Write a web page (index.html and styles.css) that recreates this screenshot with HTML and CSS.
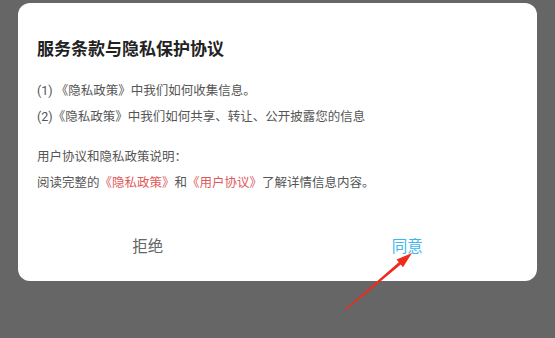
FILE: index.html
```html
<!DOCTYPE html>
<html lang="zh-CN">
<head>
<meta charset="utf-8">
<link rel="stylesheet" href="styles.css">
</head>
<body>
<div class="dialog">
  <h1 class="title">服务条款与隐私保护协议</h1>
  <p class="line">(1) 《隐私政策》中我们如何收集信息。</p>
  <p class="line">(2)《隐私政策》中我们如何共享、转让、公开披露您的信息</p>
  <p class="line gap">用户协议和隐私政策说明：</p>
  <p class="line">阅读完整的<span class="link">《隐私政策》</span>和<span class="link">《用户协议》</span>了解详情信息内容。</p>
  <div class="actions">
    <div class="btn reject">拒绝</div>
    <div class="btn agree">同意</div>
  </div>
</div>
<svg class="arrow" width="555" height="338" viewBox="0 0 555 338">
  <polygon points="344.6,309.6 398.8,262.2 396.6,259.6 412,253 403,267.2 400.8,264.5 345.4,310.4" fill="#f02a1e"/>
</svg>
</body>
</html>
```
FILE: styles.css
```css
html, body {
  margin: 0;
  padding: 0;
}
body {
  background: #666666;
  width: 555px;
  height: 338px;
  position: relative;
  overflow: hidden;
  font-family: Roboto, "Noto Sans CJK SC", sans-serif;
}
.dialog {
  margin: 3px 0 0 18px;
  width: 519px;
  height: 278px;
  background: #ffffff;
  border-radius: 12px;
  box-sizing: border-box;
  padding: 34px 19px 0 19px;
  display: flex;
  flex-direction: column;
}
.title {
  margin: 0 0 17px 0;
  font-size: 17px;
  line-height: 24px;
  font-weight: 700;
  color: #222222;
}
.line {
  margin: 0;
  font-size: 12.5px;
  line-height: 26px;
  color: #555555;
  white-space: nowrap;
}
.line.gap {
  margin-top: 14px;
}
.link {
  color: #e0595a;
}
.actions {
  margin: auto -19px 16px -19px;
  height: 40px;
  display: flex;
}
.btn {
  flex: 1;
  display: flex;
  align-items: center;
  justify-content: center;
  font-size: 15.5px;
}
.reject {
  color: #666666;
}
.agree {
  color: #3db6ef;
}
.arrow {
  position: absolute;
  left: 0;
  top: 0;
  pointer-events: none;
}
```
